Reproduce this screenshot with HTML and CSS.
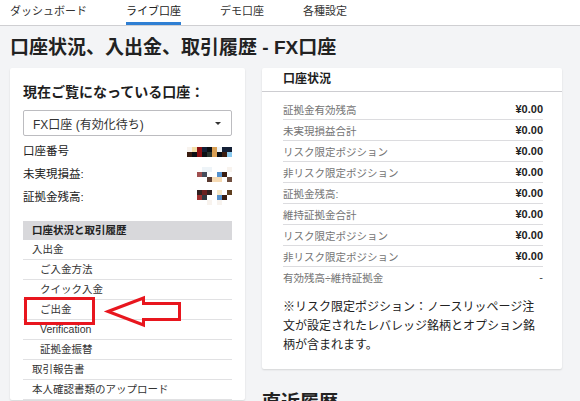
FILE: index.html
```html
<!DOCTYPE html>
<html lang="ja">
<head>
<meta charset="utf-8">
<title>口座状況、入出金、取引履歴 - FX口座</title>
<link rel="stylesheet" href="styles.css">
</head>
<body>
<nav class="topnav">
  <a class="tab">ダッシュボード</a>
  <a class="tab active">ライブ口座</a>
  <a class="tab">デモ口座</a>
  <a class="tab">各種設定</a>
</nav>
<main class="page">
  <h1 class="page-title">口座状況、入出金、取引履歴 - FX口座</h1>
  <div class="columns">
    <section class="card account-card">
      <h2 class="account-heading">現在ご覧になっている口座：</h2>
      <div class="select"><span>FX口座 (有効化待ち)</span><span class="caret"></span></div>
      <div class="info-row">
        <span>口座番号</span>
        <span class="pix">
          <i class="w"></i><i class="y"></i><i class="r"></i><i class="n"></i><i class="b"></i><i class="o"></i><i class="l"></i><i class="n"></i><i class="n"></i>
          <i class="d"></i><i class="b"></i><i class="r"></i><i class="b"></i><i class="g"></i><i class="o"></i><i class="b"></i><i class="d"></i><i class="c"></i>
        </span>
      </div>
      <div class="info-row">
        <span>未実現損益:</span>
        <span class="pix">
          <i></i><i></i><i></i><i class="l"></i><i class="l"></i><i></i><i></i><i></i><i class="w"></i>
          <i></i><i></i><i class="p"></i><i class="s"></i><i></i><i></i><i class="u"></i><i class="d"></i><i></i>
          <i></i><i></i><i></i><i></i><i class="e"></i><i class="k"></i><i class="k"></i><i></i><i class="m"></i>
        </span>
      </div>
      <div class="info-row">
        <span>証拠金残高:</span>
        <span class="pix">
          <i></i><i></i><i class="b2"></i><i class="r2"></i><i class="b2"></i><i></i><i class="k2"></i><i></i><i class="m2"></i>
          <i></i><i></i><i class="p2"></i><i class="s2"></i><i></i><i></i><i class="u"></i><i class="d"></i><i></i>
          <i></i><i></i><i></i><i></i><i class="w"></i><i></i><i class="w"></i><i></i><i></i>
        </span>
      </div>
      <div class="menu">
        <div class="menu-header">口座状況と取引履歴</div>
        <div class="menu-item">入出金</div>
        <div class="menu-item sub">ご入金方法</div>
        <div class="menu-item sub">クイック入金</div>
        <div class="menu-item sub">ご出金</div>
        <div class="menu-item sub">Verification</div>
        <div class="menu-item sub">証拠金振替</div>
        <div class="menu-item">取引報告書</div>
        <div class="menu-item">本人確認書類のアップロード</div>
      </div>
    </section>
    <div class="right-col">
      <section class="card status-card">
        <div class="status-header">口座状況</div>
        <div class="status-body">
          <div class="stat-row"><span class="label">証拠金有効残高</span><span class="value">¥0.00</span></div>
          <div class="stat-row"><span class="label">未実現損益合計</span><span class="value">¥0.00</span></div>
          <div class="stat-row"><span class="label">リスク限定ポジション</span><span class="value">¥0.00</span></div>
          <div class="stat-row"><span class="label">非リスク限定ポジション</span><span class="value">¥0.00</span></div>
          <div class="stat-row"><span class="label">証拠金残高:</span><span class="value">¥0.00</span></div>
          <div class="stat-row"><span class="label">維持証拠金合計</span><span class="value">¥0.00</span></div>
          <div class="stat-row"><span class="label">リスク限定ポジション</span><span class="value">¥0.00</span></div>
          <div class="stat-row"><span class="label">非リスク限定ポジション</span><span class="value">¥0.00</span></div>
          <div class="stat-row"><span class="label">有効残高÷維持証拠金</span><span class="value dash">-</span></div>
          <p class="note">※リスク限定ポジション：ノースリッページ注文が設定されたレバレッジ銘柄とオプション銘柄が含まれます。</p>
        </div>
      </section>
      <h2 class="section-title">直近履歴</h2>
    </div>
  </div>
</main>
<svg class="annotation" width="580" height="401" viewBox="0 0 580 401" aria-hidden="true">
  <rect x="25.5" y="298.5" width="68" height="25" fill="none" stroke="#e8161e" stroke-width="3"/>
  <polygon points="108,311.5 143.5,298 143.5,303.5 179.5,303.5 179.5,319.5 143.5,319.5 143.5,325" fill="none" stroke="#e8161e" stroke-width="3" stroke-linejoin="miter"/>
</svg>
</body>
</html>
```

FILE: styles.css
```css
* { box-sizing: border-box; }

html, body {
  margin: 0;
  padding: 0;
}

body {
  background: #f3f4f6;
  font-family: "Liberation Sans", "Noto Sans CJK JP", sans-serif;
  color: #222;
  position: relative;
  overflow: hidden;
  height: 401px;
}

.topnav {
  background: #fff;
  height: 26px;
  border-bottom: 1px solid #cfcfd2;
  display: flex;
  gap: 39px;
  padding-left: 10px;
}

.tab {
  font-size: 11px;
  line-height: 22px;
  height: 25px;
  color: #333;
  border-bottom: 3px solid transparent;
  white-space: nowrap;
}

.tab.active {
  border-bottom-color: #2f7fd3;
  color: #222;
}

.page {
  padding: 0 10px;
}

.page-title {
  margin: 10px 0 8px;
  font-size: 19px;
  line-height: 24px;
  font-weight: bold;
  color: #222;
}

.columns {
  display: grid;
  grid-template-columns: 235px 300px;
  gap: 17px;
  align-items: start;
}

.card {
  background: #fff;
  box-shadow: 0 1px 2px rgba(0, 0, 0, 0.13);
  border-radius: 2px;
}

.account-card {
  padding: 14px 13px 0;
}

.account-heading {
  margin: 0;
  font-size: 14px;
  line-height: 20px;
  font-weight: bold;
  color: #1e1e1e;
}

.select {
  margin-top: 8px;
  height: 26px;
  border: 1px solid #bcbcc0;
  border-radius: 2px;
  display: flex;
  align-items: center;
  justify-content: space-between;
  padding: 0 10px 0 9px;
  font-size: 12px;
  color: #333;
}

.caret {
  width: 0;
  height: 0;
  border-left: 3px solid transparent;
  border-right: 3px solid transparent;
  border-top: 3px solid #333;
}

.info-row {
  height: 23px;
  display: flex;
  align-items: center;
  justify-content: space-between;
  font-size: 11.5px;
  color: #222;
}

.select + .info-row { margin-top: 2px; }

.pix {
  display: grid;
  grid-template-columns: repeat(9, 5px);
  grid-auto-rows: 5px;
  margin-top: 4px;
}

.pix i { display: block; }
.pix .w { background: #f8f3ee; }
.pix .y { background: #f3dfa8; }
.pix .r { background: #8e0f12; }
.pix .n { background: #142036; }
.pix .b { background: #0b0f14; }
.pix .o { background: #d9a055; }
.pix .l { background: #eef4f8; }
.pix .d { background: #3a1d10; }
.pix .g { background: #29352e; }
.pix .c { background: #8ccbf0; }
.pix .p { background: #a05050; }
.pix .s { background: #454d5c; }
.pix .u { background: #5693cf; }
.pix .e { background: #5a3a30; }
.pix .k { background: #f6dab4; }
.pix .m { background: #704f40; }
.pix .b2 { background: #302020; }
.pix .r2 { background: #6a2020; }
.pix .k2 { background: #f5e8c8; }
.pix .m2 { background: #604020; }
.pix .p2 { background: #a03030; }
.pix .s2 { background: #303840; }

.menu {
  margin-top: 14px;
}

.menu-header {
  background: #d8d8db;
  height: 19px;
  line-height: 19px;
  padding-left: 9px;
  font-size: 10.5px;
  font-weight: bold;
  color: #222;
}

.menu-item {
  height: 20px;
  line-height: 19px;
  border-bottom: 1px solid #e1e1e3;
  padding-left: 9px;
  font-size: 10.5px;
  color: #333;
  white-space: nowrap;
}

.menu-item.sub {
  padding-left: 17px;
}

.status-header {
  height: 24px;
  line-height: 23px;
  border-bottom: 1px solid #cdcdd1;
  padding-left: 21px;
  font-size: 12px;
  font-weight: bold;
  color: #1e1e1e;
}

.status-body {
  padding: 7px 19px 14px 21px;
}

.stat-row {
  height: 21px;
  border-bottom: 1px solid #dcdcdf;
  display: flex;
  align-items: center;
  justify-content: space-between;
}

.stat-row:last-of-type { border-bottom: none; height: 20px; }

.label {
  font-size: 10.5px;
  color: #747474;
  white-space: nowrap;
}

.value {
  font-size: 11px;
  font-weight: bold;
  color: #222;
}

.value.dash {
  font-weight: normal;
  color: #444;
}

.note {
  margin: 11px 0 0;
  font-size: 12px;
  line-height: 19px;
  color: #222;
}

.section-title {
  margin: 22px 0 0;
  font-size: 19px;
  line-height: 24px;
  font-weight: bold;
  color: #222;
}

.annotation {
  position: absolute;
  left: 0;
  top: 0;
  pointer-events: none;
}
```
